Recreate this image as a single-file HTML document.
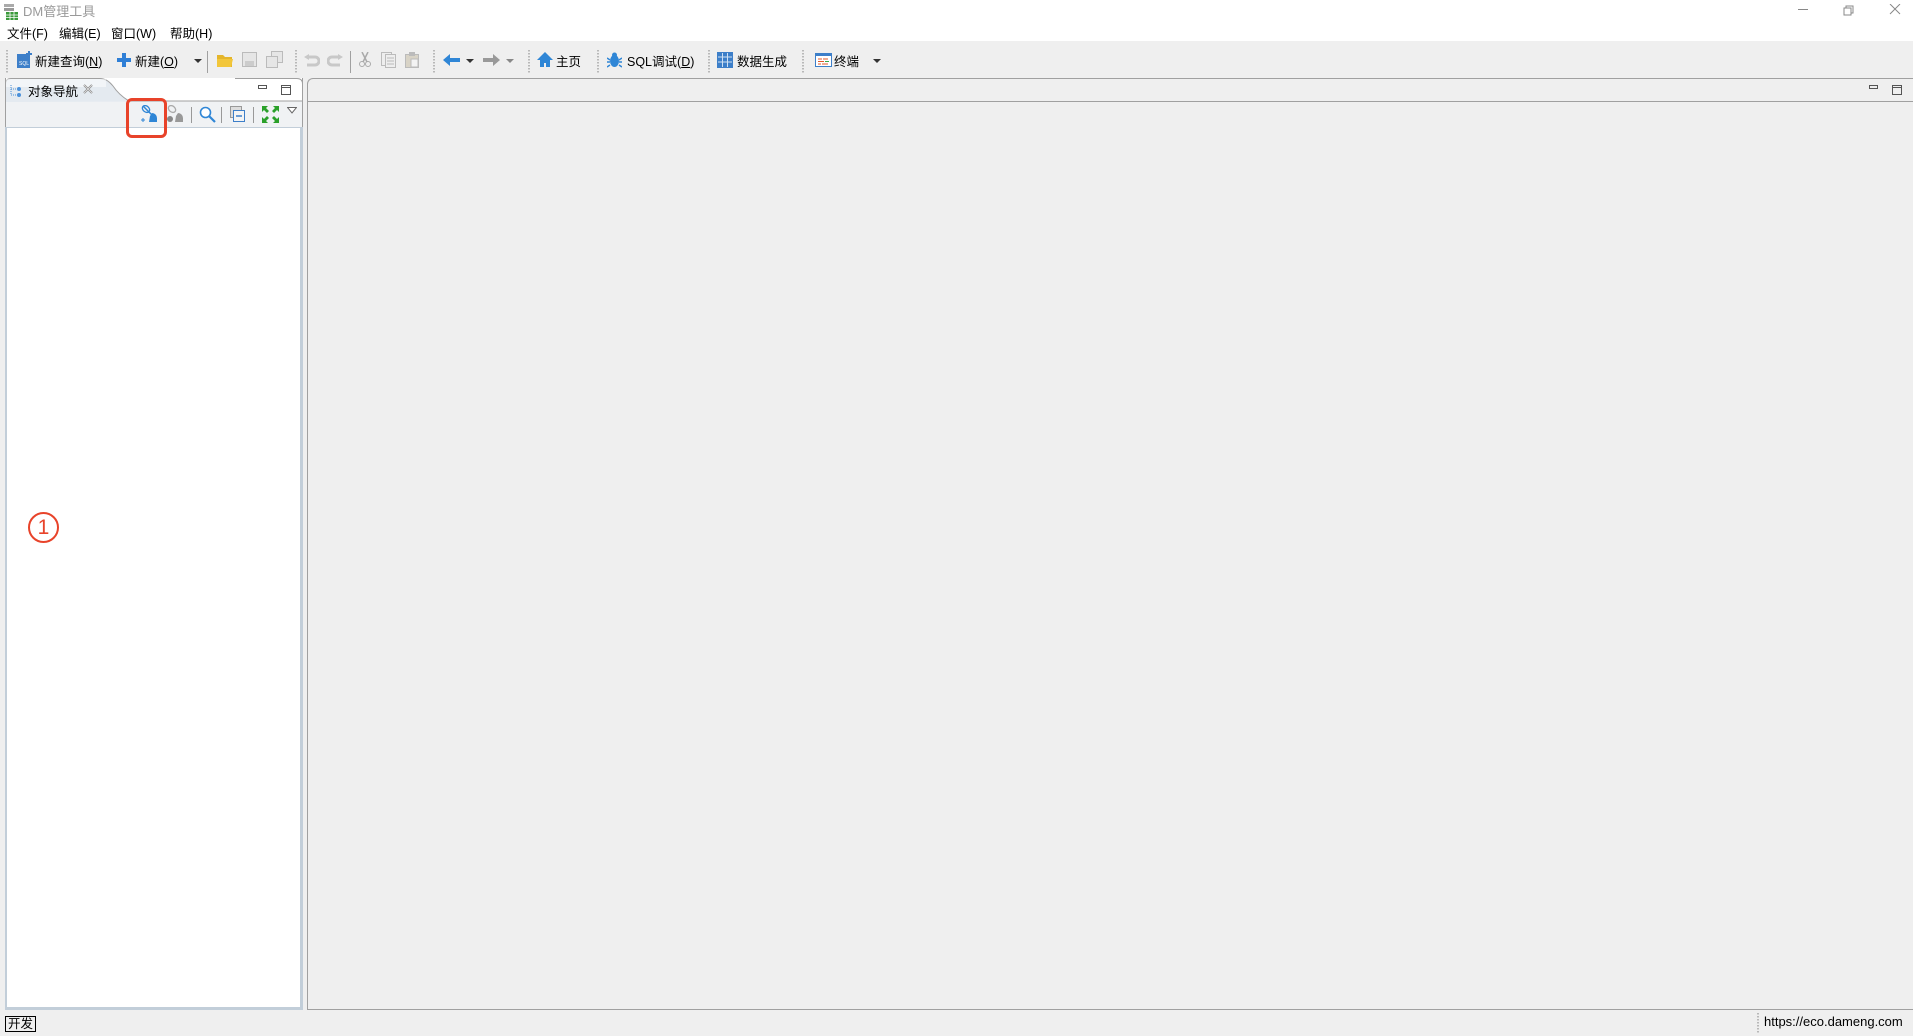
<!DOCTYPE html>
<html><head><meta charset="utf-8"><style>
*{margin:0;padding:0;box-sizing:border-box}
body{width:1913px;height:1036px;background:#efefef;position:relative;overflow:hidden;font-family:"Liberation Sans","Noto Sans CJK SC",sans-serif;font-size:12.5px;color:#000}
.a{position:absolute;white-space:nowrap}
.dots{position:absolute;top:50px;width:2px;height:24px;background-image:linear-gradient(#b8b8b8 50%,transparent 50%);background-size:2px 3px}
.sep{position:absolute;top:51px;width:1px;height:22px;background:#a0a0a0}
.dd{position:absolute;width:0;height:0;border-left:4px solid transparent;border-right:4px solid transparent;border-top:4px solid #333}
</style></head><body>
<div class="a" style="left:0;top:0;width:1913px;height:41px;background:#fff"></div>
<svg class="a" style="left:4px;top:4px" width="14" height="16"><rect x="0" y="0" width="10" height="3" fill="#aaa"/><rect x="0" y="4" width="10" height="3" fill="#999"/><rect x="2" y="8" width="12" height="8" fill="#3a9a3a"/><path d="M2 11h12M2 13.5h12M6 8v8M10 8v8" stroke="#fff" stroke-width=".8"/></svg>
<div class="a" style="left:23px;top:1px;font-size:13px;color:#999">DM管理工具</div>
<svg class="a" style="left:1798px;top:4px" width="110" height="16"><path d="M0 5.5h10" stroke="#888"/><rect x="46" y="4" width="7" height="7" fill="none" stroke="#888"/><path d="M48 4V2h7v7h-2" fill="none" stroke="#888"/><path d="M92 0l10 10M102 0l-10 10" stroke="#888"/></svg>
<div class="a" style="left:7px;top:23px">文件(F)</div>
<div class="a" style="left:59px;top:23px">编辑(E)</div>
<div class="a" style="left:111px;top:23px">窗口(W)</div>
<div class="a" style="left:170px;top:23px">帮助(H)</div>
<div class="dots" style="left:6px"></div>
<svg class="a" style="left:16px;top:51px" width="17" height="18"><rect x="1" y="3" width="13" height="14" fill="#3d7fc9"/><text x="3" y="14" font-size="5" fill="#fff" font-family="Liberation Sans">SQL</text><path d="M13 0v6M10 3h6" stroke="#3d7fc9" stroke-width="2"/></svg>
<div class="a" style="left:35px;top:51px">新建查询(<u>N</u>)</div>
<svg class="a" style="left:117px;top:53px" width="14" height="14"><path d="M7 0v14M0 7h14" stroke="#2f7fd6" stroke-width="4"/></svg>
<div class="a" style="left:135px;top:51px">新建(<u>O</u>)</div>
<div class="dd" style="left:194px;top:59px"></div>
<div class="sep" style="left:207px"></div>
<svg class="a" style="left:217px;top:53px" width="16" height="14"><path d="M0 2h6l2 2h7v10H0z" fill="#e4b52b"/><path d="M0 6h16l-2 8H0z" fill="#f2c63a"/></svg>
<svg class="a" style="left:242px;top:52px" width="15" height="15"><rect x="0.5" y="0.5" width="14" height="14" fill="#e6e6e6" stroke="#bbb"/><rect x="3" y="9" width="9" height="5" fill="#ccc"/></svg>
<svg class="a" style="left:266px;top:51px" width="17" height="17"><rect x="5.5" y="0.5" width="11" height="11" fill="#e6e6e6" stroke="#bbb"/><rect x="0.5" y="5.5" width="11" height="11" fill="#e6e6e6" stroke="#bbb"/></svg>
<div class="dots" style="left:295px"></div>
<svg class="a" style="left:304px;top:54px" width="16" height="13"><path d="M3 3h8a4 4 0 010 8H3" fill="none" stroke="#c8c8c8" stroke-width="3"/><path d="M0 3l5-3v6z" fill="#c8c8c8"/></svg>
<svg class="a" style="left:327px;top:54px" width="16" height="13"><path d="M13 3H5a4 4 0 000 8h8" fill="none" stroke="#c8c8c8" stroke-width="3"/><path d="M16 3l-5-3v6z" fill="#c8c8c8"/></svg>
<div class="sep" style="left:350px"></div>
<svg class="a" style="left:359px;top:52px" width="12" height="16"><path d="M3 0l5 10M9 0L4 10" stroke="#aaa" stroke-width="1.5"/><circle cx="3" cy="12" r="2.5" fill="none" stroke="#aaa"/><circle cx="9" cy="12" r="2.5" fill="none" stroke="#aaa"/></svg>
<svg class="a" style="left:381px;top:52px" width="15" height="16"><rect x="0.5" y="0.5" width="10" height="13" fill="#eee" stroke="#bbb"/><rect x="4.5" y="2.5" width="10" height="13" fill="#eee" stroke="#bbb"/><path d="M6 6h7M6 9h7M6 12h7" stroke="#bbb"/></svg>
<svg class="a" style="left:405px;top:52px" width="15" height="16"><rect x="0.5" y="2.5" width="13" height="13" fill="#d8d3c6" stroke="#bbb"/><rect x="4" y="0" width="6" height="4" fill="#bbb"/><rect x="6" y="7" width="7" height="8" fill="#f3f3f3" stroke="#bbb"/></svg>
<div class="dots" style="left:433px"></div>
<svg class="a" style="left:443px;top:54px" width="17" height="12"><path d="M0 6l7-6v4h10v4H7v4z" fill="#2f86d6"/></svg>
<div class="dd" style="left:466px;top:59px"></div>
<svg class="a" style="left:483px;top:54px" width="17" height="12"><path d="M17 6l-7-6v4H0v4h10v4z" fill="#999"/></svg>
<div class="dd" style="left:506px;top:59px;border-top-color:#888"></div>
<div class="dots" style="left:528px"></div>
<svg class="a" style="left:537px;top:52px" width="16" height="15"><path d="M8 0L0 8h3v7h4v-4h2v4h4V8h3z" fill="#2f86d6"/></svg>
<div class="a" style="left:556px;top:51px">主页</div>
<div class="dots" style="left:597px"></div>
<svg class="a" style="left:607px;top:52px" width="15" height="16"><ellipse cx="7.5" cy="9" rx="4.5" ry="6" fill="#2f86d6"/><circle cx="7.5" cy="3" r="2.5" fill="#2f86d6"/><path d="M0 6l3 2M15 6l-3 2M0 10h3M12 10h3M0 15l3-2M15 15l-3-2" stroke="#2f86d6" stroke-width="1.5"/></svg>
<div class="a" style="left:627px;top:51px">SQL调试(<u>D</u>)</div>
<div class="dots" style="left:708px"></div>
<svg class="a" style="left:717px;top:52px" width="16" height="16"><rect x="0" y="0" width="16" height="16" fill="#3d7fc9"/><path d="M1 5h14M1 10h14M5.5 1v14M10.5 1v14" stroke="#cfe0f3" stroke-width="1"/></svg>
<div class="a" style="left:737px;top:51px">数据生成</div>
<div class="dots" style="left:802px"></div>
<svg class="a" style="left:815px;top:53px" width="17" height="14"><rect x="0.5" y="0.5" width="16" height="13" fill="#fff" stroke="#3d7fc9"/><rect x="0" y="0" width="17" height="3" fill="#3d7fc9"/><path d="M3 6h4M8 6h5M3 8.5h6M3 11h3M7 11h6" stroke="#e05a2a"/><path d="M10 8.5h4" stroke="#39a845"/></svg>
<div class="a" style="left:834px;top:51px">终端</div>
<div class="dd" style="left:873px;top:59px"></div>
<div class="a" style="left:5px;top:78px;width:298px;height:932px;border:1px solid #a0a0a0;border-top:none;background:#fff"></div>
<div class="a" style="left:5px;top:101px;width:298px;height:26px;background:#f0f2f4;border-left:1px solid #a0a0a0;border-right:1px solid #a0a0a0"></div>
<div class="a" style="left:5px;top:127px;width:298px;height:883px;border:3px solid #c2ced9;border-top:1px solid #c2ced9;border-left:2px solid #c2ced9;background:#fff"></div>
<svg class="a" style="left:5px;top:78px" width="298" height="24"><path d="M0.5 24V6Q0.5 0.5 6 0.5H95Q102 0.5 108 8Q114 17 124 23H297.5" fill="#e4eaf0" stroke="#a0a0a0"/><path d="M297.5 24V6Q297.5 .5 292 .5H230" fill="none" stroke="#a0a0a0"/><rect x="1" y="1" width="100" height="8" fill="#fff" opacity=".5"/></svg>
<svg class="a" style="left:10px;top:84px" width="12" height="13"><path d="M1 1v10h6M1 5h6" stroke="#4a90d9" stroke-dasharray="1 1" fill="none"/><circle cx="9" cy="5" r="2" fill="#4a90d9"/><circle cx="9" cy="11" r="2" fill="#4a90d9"/></svg>
<div class="a" style="left:28px;top:81px;font-size:12.5px">对象导航</div>
<svg class="a" style="left:83px;top:84px" width="10" height="10"><path d="M1 1l8 8M9 1l-8 8" stroke="#888" stroke-width="2"/><path d="M1 1l8 8M9 1l-8 8" stroke="#eee" stroke-width=".7"/></svg>
<svg class="a" style="left:258px;top:84px" width="40" height="12"><rect x="0.5" y="1.5" width="8" height="3" fill="none" stroke="#555"/><rect x="23.5" y="1.5" width="9" height="9" fill="none" stroke="#555"/><path d="M24 3.5h8" stroke="#555"/></svg>
<svg class="a" style="left:140px;top:105px" width="20" height="18"><path d="M3 1l9 9" stroke="#2f86d6" stroke-width="1.5" fill="none"/><ellipse cx="6" cy="4" rx="4" ry="3" fill="none" stroke="#2f86d6" stroke-width="1.3" transform="rotate(40 6 4)"/><path d="M12 8a5 5 0 015 5v4h-8l1-6z" fill="#2f86d6"/><path d="M3 13v4M1 15h4" stroke="#2f86d6"/></svg>
<svg class="a" style="left:166px;top:105px" width="20" height="18"><ellipse cx="6" cy="4" rx="4" ry="3" fill="none" stroke="#aaa" stroke-width="1.3" transform="rotate(40 6 4)"/><path d="M12 8a5 5 0 015 5v4h-8l1-6z" fill="#999"/><circle cx="4" cy="14" r="3" fill="#888"/></svg>
<div class="a" style="left:191px;top:107px;width:1px;height:16px;background:#999"></div>
<svg class="a" style="left:199px;top:106px" width="17" height="17"><circle cx="6.5" cy="6.5" r="5" fill="#fff" stroke="#2f86d6" stroke-width="1.6"/><path d="M10 10l6 6" stroke="#2f86d6" stroke-width="2.2"/></svg>
<div class="a" style="left:221px;top:107px;width:1px;height:16px;background:#999"></div>
<svg class="a" style="left:230px;top:106px" width="16" height="17"><rect x="0.5" y="0.5" width="11" height="11" fill="#ddd" stroke="#999"/><rect x="3.5" y="4.5" width="11" height="11" fill="#f4f4f4" stroke="#3d7fc9"/><path d="M6 10h6" stroke="#3d7fc9" stroke-width="1.5"/></svg>
<div class="a" style="left:253px;top:107px;width:1px;height:16px;background:#999"></div>
<svg class="a" style="left:262px;top:106px" width="17" height="17"><path d="M0 0h6L4 2l3 3-2 2-3-3-2 2zM17 0v6l-2-2-3 3-2-2 3-3-2-2zM0 17v-6l2 2 3-3 2 2-3 3 2 2zM17 17h-6l2-2-3-3 2-2 3 3 2-2z" fill="#2aa02a"/></svg>
<svg class="a" style="left:287px;top:107px" width="10" height="7"><path d="M.5 .5h9L5 6z" fill="#fff" stroke="#666"/></svg>
<div class="a" style="left:126px;top:98px;width:41px;height:40px;border:3px solid #e8432a;border-radius:6px"></div>
<div class="a" style="left:28px;top:512px;width:31px;height:31px;border:2px solid #e8432a;border-radius:50%;color:#e8432a;font-size:21px;text-align:center;line-height:27px">1</div>
<div class="a" style="left:307px;top:78px;width:1606px;height:932px;border:1px solid #a0a0a0;border-right:none;border-top-left-radius:6px"></div>
<div class="a" style="left:308px;top:101px;width:1605px;height:1px;background:#a0a0a0"></div>
<svg class="a" style="left:1869px;top:84px" width="40" height="12"><rect x="0.5" y="1.5" width="8" height="3" fill="none" stroke="#555"/><rect x="23.5" y="1.5" width="9" height="9" fill="none" stroke="#555"/><path d="M24 3.5h8" stroke="#555"/></svg>
<div class="a" style="left:5px;top:1016px;height:16px;padding:0 2px;border:1px solid #000;font-size:12.5px;line-height:14px">开发</div>
<div class="dots" style="left:1757px;top:1013px;height:20px"></div>
<div class="a" style="left:1764px;top:1014px;font-size:13px">https://eco.dameng.com</div>
</body></html>
